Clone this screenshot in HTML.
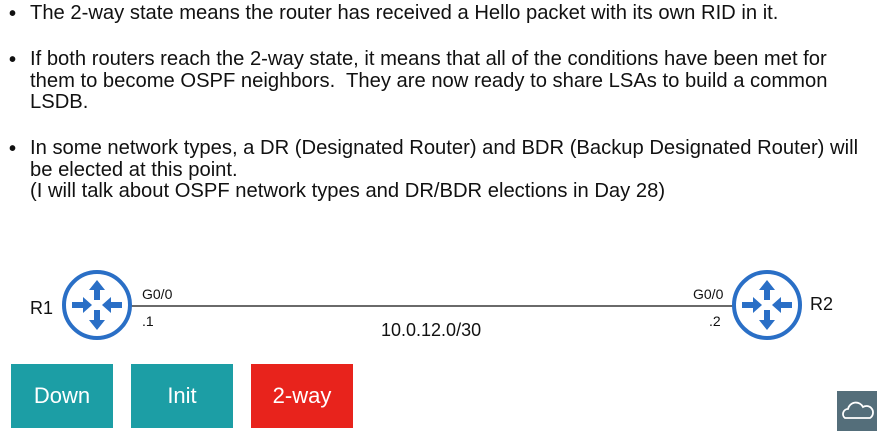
<!DOCTYPE html>
<html><head><style>
body{margin:0;width:877px;height:431px;background:#fff;position:relative;overflow:hidden;font-family:"Liberation Sans",sans-serif;color:#111}
.t{position:absolute;left:30px;font-size:20.2px;line-height:21.5px;width:840px}
.b{position:absolute;left:9px;font-size:20px;font-weight:bold}
.box{position:absolute;top:364px;width:102px;height:64px;color:#fff;font-size:22px;text-align:center;line-height:64px}
.s{position:absolute;font-size:14px}
</style></head><body>
<div class="b" style="top:3px">•</div><div class="t" style="top:3px">The 2-way state means the router has received a Hello packet with its own RID in it.</div>
<div class="b" style="top:49px">•</div><div class="t" style="top:49px">If both routers reach the 2-way state, it means that all of the conditions have been met for them to become OSPF neighbors.&nbsp; They are now ready to share LSAs to build a common LSDB.</div>
<div class="b" style="top:138px">•</div><div class="t" style="top:138px">In some network types, a DR (Designated Router) and BDR (Backup Designated Router) will be elected at this point.<br>(I will talk about OSPF network types and DR/BDR elections in Day 28)</div>
<svg width="877" height="431" style="position:absolute;left:0;top:0">
<line x1="130" y1="306" x2="735" y2="306" stroke="#111" stroke-width="1.3"/>
<defs><g id="r"><circle r="33" fill="#fff" stroke="#2a6fc6" stroke-width="4"/>
<g fill="#2a6fc6"><path d="M0-25 L-8-15 L-3-15 L-3-5 L3-5 L3-15 L8-15Z"/><path d="M0 25 L-8 15 L-3 15 L-3 5 L3 5 L3 15 L8 15Z"/>
<path d="M-5 0 L-14-8 L-14-3 L-25-3 L-25 3 L-14 3 L-14 8Z"/><path d="M5 0 L14-8 L14-3 L25-3 L25 3 L14 3 L14 8Z"/></g></g></defs>
<use href="#r" x="97" y="305"/><use href="#r" x="767" y="305"/>
<rect x="837" y="391" width="40" height="40" fill="#546e7a"/>
<path d="M845 418 a5 5 0 0 1 3-9 a8 8 0 0 1 15-2 a6 6 0 0 1 7 11 Z" fill="none" stroke="#fff" stroke-width="1.8"/>
</svg>
<div class="s" style="left:30px;top:298px;font-size:18px">R1</div>
<div class="s" style="left:810px;top:294px;font-size:18px">R2</div>
<div class="s" style="left:142px;top:286px">G0/0</div>
<div class="s" style="left:142px;top:313px">.1</div>
<div class="s" style="left:693px;top:286px">G0/0</div>
<div class="s" style="left:709px;top:313px">.2</div>
<div class="s" style="left:381px;top:320px;font-size:18px">10.0.12.0/30</div>
<div class="box" style="left:11px;background:#1c9ea5">Down</div>
<div class="box" style="left:131px;background:#1c9ea5">Init</div>
<div class="box" style="left:251px;background:#e8231c">2-way</div>
</body></html>
